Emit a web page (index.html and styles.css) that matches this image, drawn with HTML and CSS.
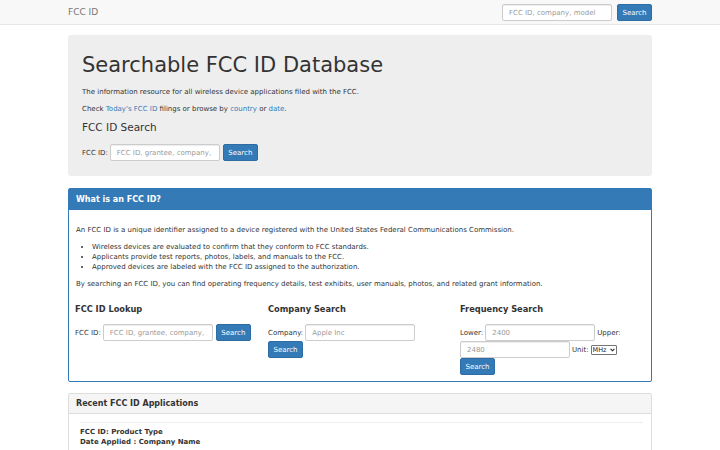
FILE: index.html
```html
<!DOCTYPE html>
<html>
<head>
  <title>FCC ID</title>
  <link rel="stylesheet" href="styles.css">
</head>
<body>
  <div class="navbar">
    <div class="container nav-inner">
      <a class="brand" href="#">FCC ID</a>
      <form class="nav-search">
        <input class="field" type="text" placeholder="FCC ID, company, model">
        <button class="btn" type="button">Search</button>
      </form>
    </div>
  </div>

  <div class="container">
    <div class="jumbotron">
      <h1>Searchable FCC ID Database</h1>
      <p>The information resource for all wireless device applications filed with the FCC.</p>
      <p>Check <a href="#">Today's FCC ID</a> filings or browse by <a href="#">country</a> or <a href="#">date</a>.</p>
      <h3>FCC ID Search</h3>
      <form class="line">
        <label>FCC ID:</label>
        <input class="field" type="text" placeholder="FCC ID, grantee, company,">
        <button class="btn" type="button">Search</button>
      </form>
    </div>

    <div class="panel panel-primary">
      <div class="panel-heading">What is an FCC ID?</div>
      <div class="panel-body">
        <p class="first">An FCC ID is a unique identifier assigned to a device registered with the United States Federal Communications Commission.</p>
        <ul>
          <li>Wireless devices are evaluated to confirm that they conform to FCC standards.</li>
          <li>Applicants provide test reports, photos, labels, and manuals to the FCC.</li>
          <li>Approved devices are labeled with the FCC ID assigned to the authorization.</li>
        </ul>
        <p>By searching an FCC ID, you can find operating frequency details, test exhibits, user manuals, photos, and related grant information.</p>

        <div class="search-cols">
          <div class="col">
            <h4>FCC ID Lookup</h4>
            <div class="line">
              <label>FCC ID:</label>
              <input class="field" type="text" placeholder="FCC ID, grantee, company,">
              <button class="btn" type="button">Search</button>
            </div>
          </div>
          <div class="col">
            <h4>Company Search</h4>
            <div class="line">
              <label>Company:</label>
              <input class="field" type="text" placeholder="Apple Inc">
            </div>
            <div class="line">
              <button class="btn" type="button">Search</button>
            </div>
          </div>
          <div class="col">
            <h4>Frequency Search</h4>
            <div class="line">
              <label>Lower:</label>
              <input class="field" type="text" placeholder="2400">
              <label>Upper:</label>
            </div>
            <div class="line">
              <input class="field" type="text" placeholder="2480">
              <label>Unit:</label>
              <span class="unit-wrap">
                <select class="unit"><option>MHz</option></select>
                <svg class="unit-arrow" width="5" height="4" viewBox="0 0 5 4"><path d="M0.6 0.8 L2.5 2.8 L4.4 0.8" fill="none" stroke="#222" stroke-width="1.1"/></svg>
              </span>
            </div>
            <div class="line">
              <button class="btn" type="button">Search</button>
            </div>
          </div>
        </div>
      </div>
    </div>

    <div class="panel panel-default">
      <div class="panel-heading">Recent FCC ID Applications</div>
      <div class="panel-body recent">
        <hr>
        <div class="recent-head">
          <div>FCC ID: Product Type</div>
          <div>Date Applied : Company Name</div>
        </div>
      </div>
    </div>
  </div>
</body>
</html>
```

FILE: styles.css
```css
body {
  margin: 0;
  font-family: "DejaVu Sans", sans-serif;
  font-size: 7px;
  line-height: 10px;
  color: #333;
  background-color: #fff;
}

a {
  color: #337ab7;
  text-decoration: none;
}

.container {
  width: 584px;
  margin: 0 auto;
}

.navbar {
  height: 25px;
  background-color: #f8f8f8;
  border-bottom: 1px solid #e7e7e7;
  box-sizing: border-box;
  margin-bottom: 10px;
}

.nav-inner {
  display: flex;
  align-items: center;
  justify-content: space-between;
  height: 24px;
}

.brand {
  color: #777;
  font-size: 9px;
}

.nav-search {
  display: flex;
  align-items: center;
  gap: 5px;
  margin-top: 1px;
}

.field {
  width: 110px;
  height: 17px;
  box-sizing: border-box;
  padding: 0 6px;
  border: 1px solid #ccc;
  border-radius: 2px;
  font-family: "DejaVu Sans", sans-serif;
  font-size: 7px;
  color: #555;
  background: #fff;
  box-shadow: inset 0 1px 1px rgba(0, 0, 0, 0.075);
}

.field::placeholder {
  color: #999;
}

.btn {
  height: 17px;
  width: 35px;
  padding: 0;
  border: 1px solid #2e6da4;
  border-radius: 2px;
  background-color: #337ab7;
  color: #fff;
  font-family: "DejaVu Sans", sans-serif;
  font-size: 7px;
}

.jumbotron {
  background-color: #eee;
  border-radius: 3px;
  padding: 13px 14px 15px;
  margin-bottom: 12px;
}

.jumbotron h1 {
  margin: 0 0 4px;
  font-size: 21px;
  line-height: 35px;
  font-weight: normal;
}

.jumbotron p {
  margin: 0 0 7px;
}

.jumbotron h3 {
  margin: 7px 0 10px;
  font-size: 10.5px;
  line-height: 13px;
  font-weight: normal;
}

.line {
  display: flex;
  align-items: center;
}

.line label {
  margin-right: 1px;
}

.line .btn {
  margin-left: 3px;
}

.line label + .field {
  margin-left: 1px;
}

.field + label {
  margin-left: 2px;
}

.panel {
  border: 1px solid #ddd;
  border-radius: 2px;
  margin-bottom: 11px;
}

.panel-heading {
  height: 21px;
  padding: 0 7px;
  display: flex;
  align-items: center;
  font-size: 8px;
  font-weight: bold;
}

.panel-primary {
  border-color: #337ab7;
}

.panel-primary .panel-heading {
  background-color: #337ab7;
  color: #fff;
}

.panel-default .panel-heading {
  height: 19px;
  background-color: #f5f5f5;
  border-bottom: 1px solid #ddd;
  color: #333;
}

.panel-body {
  padding: 7px 6px 6px;
}

.panel-body p {
  margin: 0 0 7px;
  padding-left: 1px;
}

.panel-body p.first {
  margin-top: 8px;
}

.panel-body ul {
  margin: 0 0 7px;
  padding-left: 17px;
  list-style: disc;
}

.search-cols {
  display: grid;
  grid-template-columns: 193px 192px auto;
  margin-top: 15px;
}

.search-cols h4 {
  margin: 0 0 10px;
  font-size: 8.25px;
  line-height: 10px;
  font-weight: bold;
}

.search-cols .col .line .btn:first-child {
  margin-left: 0;
}

.unit-wrap {
  position: relative;
  display: inline-flex;
  margin-left: 1px;
}

.unit {
  appearance: none;
  width: 26px;
  height: 10px;
  box-sizing: border-box;
  font-family: "DejaVu Sans", sans-serif;
  font-size: 6.5px;
  line-height: 8px;
  padding: 0 0 0 1px;
  border: 1px solid #767676;
  border-radius: 1px;
  background: #fff;
  color: #222;
}

.unit-arrow {
  position: absolute;
  right: 2px;
  top: 3px;
  pointer-events: none;
}

.recent {
  padding: 8px 8px 4px 11px;
}

.recent hr {
  margin: 0 0 4px;
  border: 0;
  border-top: 1px solid #eee;
}

.recent-head {
  font-weight: bold;
}
```
